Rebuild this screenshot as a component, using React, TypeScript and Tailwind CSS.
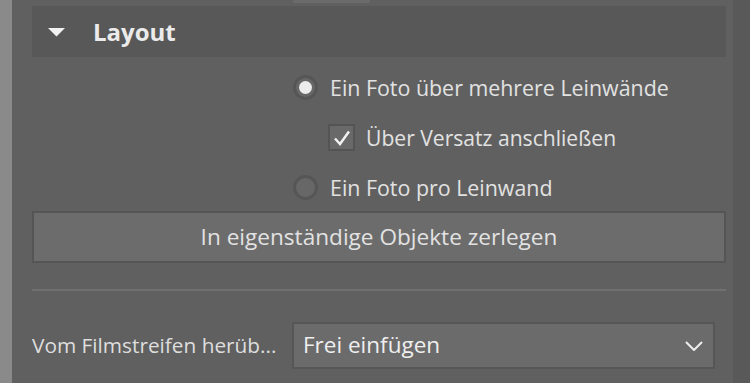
import React from 'react';

const font = { fontFamily: '"Open Sans", "Noto Sans", sans-serif' };

const Radio = ({ checked }: { checked?: boolean }) => (
  <div className="w-[25px] h-[25px] rounded-full border-[3px] border-[#565656] bg-[#676767] flex items-center justify-center">
    {checked && <div className="w-[13px] h-[13px] rounded-full bg-[#ececec]" />}
  </div>
);

const App: React.FC = () => {
  return (
    <div className="w-[750px] h-[383px] flex overflow-hidden text-[#e2e2e2]" style={font}>
      <div className="w-[12px] bg-[#8a8a8a]" />

      <div className="flex-1 bg-[#606060] flex flex-col pl-[20px] pr-[7px]">
        {/* tab stub */}
        <div className="h-[6px]">
          <div className="ml-[261px] w-[77px] h-[3px] bg-[#6a6a6a]" />
        </div>

        {/* section header */}
        <div className="h-[51px] bg-[#585858] flex items-center">
          <svg width="17" height="9" viewBox="0 0 17 9" className="ml-[16px] mt-[1px]">
            <polygon points="0,0 17,0 8.5,8.5" fill="#f2f2f2" />
          </svg>
          <span className="ml-[28px] text-[24px] font-bold text-[#ebebeb] leading-none">Layout</span>
        </div>

        {/* options */}
        <div className="flex flex-col pl-[261px] pt-[18px]">
          <div className="h-[25px] flex items-center gap-[12px]">
            <Radio checked />
            <span className="text-[21.4px] leading-none">Ein Foto über mehrere Leinwände</span>
          </div>
          <div className="h-[25px] mt-[25px] flex items-center gap-[11px] pl-[35px]">
            <div className="w-[27px] h-[27px] border-2 border-[#545454] bg-[#696969] flex items-center justify-center">
              <svg width="18" height="16" viewBox="0 0 18 16">
                <polyline points="2,8.5 7,14 16,1.5" fill="none" stroke="#f2f2f2" strokeWidth="2.4" />
              </svg>
            </div>
            <span className="text-[21.1px] leading-none">Über Versatz anschließen</span>
          </div>
          <div className="h-[25px] mt-[25px] flex items-center gap-[12px]">
            <Radio />
            <span className="text-[21.4px] leading-none">Ein Foto pro Leinwand</span>
          </div>
        </div>

        {/* action button */}
        <div className="mt-[11px] h-[52px] border-2 border-[#555555] bg-[#6c6c6c] flex items-center justify-center">
          <span className="text-[22.6px] leading-none">In eigenständige Objekte zerlegen</span>
        </div>

        {/* separator */}
        <div className="mt-[26px] h-[2px] bg-[#707070]" />

        {/* paste mode */}
        <div className="mt-[31px] flex items-center">
          <span className="w-[260px] text-[20.8px] leading-none text-[#dedede]">Vom Filmstreifen herüb...</span>
          <div className="w-[423px] h-[47px] border-2 border-[#565656] bg-[#6b6b6b] flex items-center justify-between pl-[9px] pr-[10px]">
            <span className="text-[22.5px] leading-none text-[#efefef]">Frei einfügen</span>
            <svg width="18" height="10" viewBox="0 0 18 10">
              <polyline points="1,1 9,9 17,1" fill="none" stroke="#eeeeee" strokeWidth="2" />
            </svg>
          </div>
        </div>
      </div>

      <div className="w-[17px] bg-[#595959]" />
    </div>
  );
};

export default App;
